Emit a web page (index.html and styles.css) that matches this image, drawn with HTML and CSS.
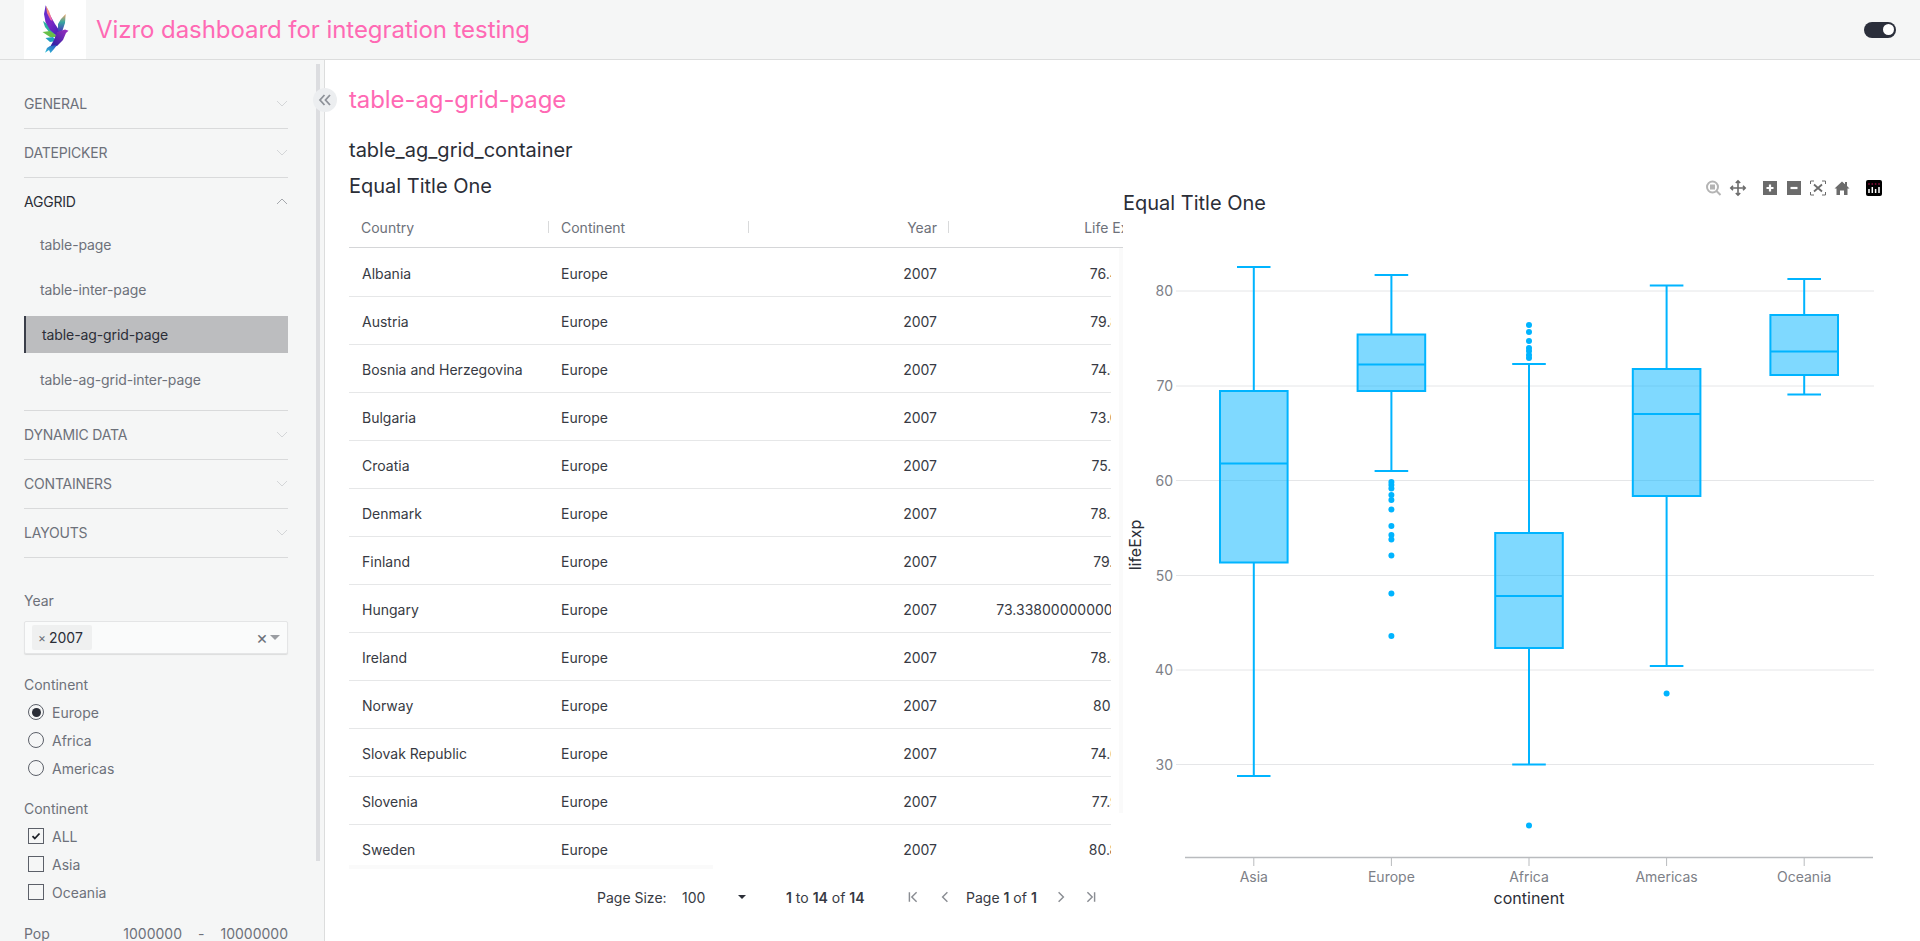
FILE: index.html
```html
<!DOCTYPE html>
<html lang="en">
<head>
<meta charset="UTF-8">
<title>Vizro dashboard for integration testing</title>
<link rel="stylesheet" href="styles.css">
</head>
<body>
<header class="app-header">
    <div class="logo">
        <svg width="62" height="59" viewBox="24 0 62 59">
            <defs>
                <linearGradient id="wingTop" x1="0" y1="0" x2="1" y2="1">
                    <stop offset="0" stop-color="#5a2fd0"/>
                    <stop offset="0.5" stop-color="#7a28c4"/>
                    <stop offset="1" stop-color="#3420b4"/>
                </linearGradient>
                <linearGradient id="wingTip" x1="0" y1="0" x2="0" y2="1">
                    <stop offset="0" stop-color="#f8a060"/>
                    <stop offset="1" stop-color="#f060b0"/>
                </linearGradient>
                <linearGradient id="rightWing" x1="0" y1="0" x2="0" y2="1">
                    <stop offset="0" stop-color="#f0a060"/>
                    <stop offset="0.45" stop-color="#38a8a0"/>
                    <stop offset="1" stop-color="#4a2cc0"/>
                </linearGradient>
                <linearGradient id="birdBody" x1="1" y1="0" x2="0" y2="1">
                    <stop offset="0" stop-color="#a030c0"/>
                    <stop offset="1" stop-color="#1f1fa0"/>
                </linearGradient>
                <linearGradient id="birdTail" x1="1" y1="0" x2="0" y2="1">
                    <stop offset="0" stop-color="#2a50c0"/>
                    <stop offset="1" stop-color="#30c8d8"/>
                </linearGradient>
            </defs>
            <polygon fill="#2fb0a0" points="43,21 50,26 57,35 50,33 45,27"/>
            <polygon fill="#68c048" points="42.500,32 50,31 59,37 50,37"/>
            <polygon fill="#1f9fc0" points="45.500,38 53,37 57,41 50,42"/>
            <polygon fill="url(#wingTop)" points="45.700,5.300 50,15 55,24 61,33 57,36 50,30 45.500,22 44,14"/>
            <polygon fill="url(#wingTip)" points="46,6 49,11 52.500,21 50.500,20 47,13"/>
            <polygon fill="url(#rightWing)" points="65.700,14 65,23 62,32 58,31 58,24 61,19"/>
            <polygon fill="url(#birdBody)" points="57,32 65,29.500 68.500,30.700 66,33 63,40 57,46 50,47 54,40"/>
            <polygon fill="url(#birdTail)" points="50,46 57,45 54,49 50.500,53 49,50 45,52.700 47,48"/>
        </svg>
    </div>
    <span class="app-title">Vizro dashboard for integration testing</span>
    <span class="theme-toggle"><span class="theme-knob"></span></span>
</header>

<div class="app-body">
    <aside class="sidebar">
        <nav class="accordion">
            <div class="acc-item"><span>GENERAL</span><svg class="chev" viewBox="0 0 12 7"><path d="M1 1l5 5 5-5"/></svg></div>
            <div class="acc-item"><span>DATEPICKER</span><svg class="chev" viewBox="0 0 12 7"><path d="M1 1l5 5 5-5"/></svg></div>
            <div class="acc-group">
                <div class="acc-item open"><span>AGGRID</span><svg class="chev" viewBox="0 0 12 7"><path d="M1 6l5-5 5 5"/></svg></div>
                <a class="acc-link">table-page</a>
                <a class="acc-link">table-inter-page</a>
                <a class="acc-link active">table-ag-grid-page</a>
                <a class="acc-link">table-ag-grid-inter-page</a>
            </div>
            <div class="acc-item"><span>DYNAMIC DATA</span><svg class="chev" viewBox="0 0 12 7"><path d="M1 1l5 5 5-5"/></svg></div>
            <div class="acc-item"><span>CONTAINERS</span><svg class="chev" viewBox="0 0 12 7"><path d="M1 1l5 5 5-5"/></svg></div>
            <div class="acc-item"><span>LAYOUTS</span><svg class="chev" viewBox="0 0 12 7"><path d="M1 1l5 5 5-5"/></svg></div>
        </nav>

        <div class="controls">
            <div class="control-label">Year</div>
            <div class="dropdown">
                <span class="tag"><span class="tag-x">×</span>2007</span>
                <span class="dd-clear">×</span>
                <span class="dd-caret"></span>
            </div>

            <div class="control-label label-second">Continent</div>
            <div class="option"><span class="radio checked"></span>Europe</div>
            <div class="option"><span class="radio"></span>Africa</div>
            <div class="option"><span class="radio"></span>Americas</div>

            <div class="control-label label-third">Continent</div>
            <div class="option"><span class="check"><svg width="10" height="8" viewBox="0 0 10 8"><path d="M1.500 4.200l2.300 2.300 4.700-5"/></svg></span>ALL</div>
            <div class="option"><span class="check"></span>Asia</div>
            <div class="option"><span class="check"></span>Oceania</div>

            <div class="range-row">
                <span>Pop</span>
                <span class="range-inputs"><span class="range-val">1000000</span><span>-</span><span class="range-val">10000000</span></span>
            </div>
        </div>
        <div class="side-scroll"></div>
        <div class="collapse-btn">
            <svg width="14" height="12" viewBox="0 0 14 12"><path d="M6.500 1L2 6l4.500 5M12 1L7.500 6l4.500 5"/></svg>
        </div>
    </aside>

    <main class="page">
        <h1 class="page-title">table-ag-grid-page</h1>
        <h2 class="container-title">table_ag_grid_container</h2>
        <div class="page-grid">
            <section class="table-col">
                <h3 class="table-title">Equal Title One</h3>
                <div class="grid-header">
                    <div class="hcell">Country</div>
                    <div class="hcell">Continent</div>
                    <div class="hcell num">Year</div>
                    <div class="hcell num">Life Exp</div>
                </div>
                <div class="grid-viewport">
                    <div class="grid-rows">
                        <div class="row"><span>Albania</span><span>Europe</span><span class="num">2007</span><span class="num">76.423</span></div>
                        <div class="row"><span>Austria</span><span>Europe</span><span class="num">2007</span><span class="num">79.829</span></div>
                        <div class="row"><span>Bosnia and Herzegovina</span><span>Europe</span><span class="num">2007</span><span class="num">74.852</span></div>
                        <div class="row"><span>Bulgaria</span><span>Europe</span><span class="num">2007</span><span class="num">73.005</span></div>
                        <div class="row"><span>Croatia</span><span>Europe</span><span class="num">2007</span><span class="num">75.748</span></div>
                        <div class="row"><span>Denmark</span><span>Europe</span><span class="num">2007</span><span class="num">78.332</span></div>
                        <div class="row"><span>Finland</span><span>Europe</span><span class="num">2007</span><span class="num">79.313</span></div>
                        <div class="row"><span>Hungary</span><span>Europe</span><span class="num">2007</span><span class="num">73.33800000000001</span></div>
                        <div class="row"><span>Ireland</span><span>Europe</span><span class="num">2007</span><span class="num">78.885</span></div>
                        <div class="row"><span>Norway</span><span>Europe</span><span class="num">2007</span><span class="num">80.196</span></div>
                        <div class="row"><span>Slovak Republic</span><span>Europe</span><span class="num">2007</span><span class="num">74.663</span></div>
                        <div class="row"><span>Slovenia</span><span>Europe</span><span class="num">2007</span><span class="num">77.926</span></div>
                        <div class="row"><span>Sweden</span><span>Europe</span><span class="num">2007</span><span class="num">80.884</span></div>
                    </div>
                    <div class="vtrack"></div>
                    <div class="htrack"></div>
                </div>
                <div class="pager">
                    <span class="pager-label">Page Size:</span>
                    <span class="pager-select">100<span class="pager-caret"></span></span>
                    <span class="pager-count"><b>1</b> to <b>14</b> of <b>14</b></span>
                    <svg class="pager-icon first" viewBox="0 0 10 10"><path d="M2 1v8M8 1L4 5l4 4"/></svg>
                    <svg class="pager-icon" viewBox="0 0 10 10"><path d="M7 1L3 5l4 4"/></svg>
                    <span class="pager-page">Page <b>1</b> of <b>1</b></span>
                    <svg class="pager-icon" viewBox="0 0 10 10"><path d="M3 1l4 4-4 4"/></svg>
                    <svg class="pager-icon" viewBox="0 0 10 10"><path d="M2 1l4 4-4 4M8 1v8"/></svg>
                </div>
            </section>

            <section class="chart-col">
                <svg class="chart" width="797" height="761" viewBox="1123 180 797 761">
                    <text class="chart-title" x="1123" y="210">Equal Title One</text>

                    <g class="modebar">
                        <g class="mb-zoom">
                            <circle cx="1712.500" cy="187" r="5.500"/>
                            <rect x="1710" y="184.500" width="5" height="5"/>
                            <path d="M1716.500 191l4 4"/>
                        </g>
                        <path class="mb-pan" d="M1738 181v14M1731 188h14M1735.800 183l2.200-2.200 2.200 2.200M1735.800 193l2.200 2.200 2.200-2.200M1733 185.800l-2.200 2.200 2.200 2.200M1743 185.800l2.200 2.200-2.200 2.200"/>
                        <rect class="mb-box" x="1763" y="181" width="14" height="14"/>
                        <path class="mb-sign" d="M1770 184.500v7M1766.500 188h7"/>
                        <rect class="mb-box" x="1787" y="181" width="14" height="14"/>
                        <path class="mb-sign" d="M1790.500 188h7"/>
                        <path class="mb-auto" d="M1810.500 184v-3h3.500M1822 181h3.500v3M1825.500 192v3h-3.500M1814 195h-3.500v-3"/>
                        <path class="mb-autox" d="M1814 184.500l8 7M1822 184.500l-8 7"/>
                        <path class="mb-home" d="M1842 181.500l3 2.700v-2.200h2v4l2.500 2.500h-2v6.500h-3.500v-4.500h-4v4.500h-3.500v-6.500h-2z"/>
                        <rect x="1866" y="180" width="16" height="16" rx="2" fill="#000"/>
                        <path class="mb-bars" d="M1869 189v4M1872.300 187v6M1875.600 189v4M1879 187v6"/>
                        <path class="mb-dots" d="M1869 183.500v1M1872.300 183.500v1M1875.600 183.500v1M1879 183.500v1"/>
                    </g>

                    <g class="gridlines">
                        <path d="M1176 291H1874M1176 386H1874M1176 480.500H1874M1176 575.500H1874M1176 670H1874M1176 764.500H1874"/>
                    </g>
                    <g class="ticklabels">
                        <text x="1173" y="296" text-anchor="end">80</text>
                        <text x="1173" y="391" text-anchor="end">70</text>
                        <text x="1173" y="485.500" text-anchor="end">60</text>
                        <text x="1173" y="580.500" text-anchor="end">50</text>
                        <text x="1173" y="675" text-anchor="end">40</text>
                        <text x="1173" y="769.500" text-anchor="end">30</text>
                    </g>
                    <text class="axis-title" transform="translate(1141 545) rotate(-90)" text-anchor="middle">lifeExp</text>

                    <!-- boxes: whisker, box, median, caps -->
                    <g class="box">
                        <path d="M1253.800 267V391M1253.800 562V776M1237 267H1270.500M1237 776H1270.500"/>
                        <rect x="1220" y="391" width="67.600" height="171.500"/>
                        <path d="M1220 463.500H1287.600"/>
                    </g>
                    <g class="box">
                        <path d="M1391.400 275V334.500M1391.400 391V471M1374.600 275H1408.200M1374.600 471H1408.200"/>
                        <rect x="1357.600" y="334.500" width="67.600" height="56.500"/>
                        <path d="M1357.600 364.500H1425.200"/>
                    </g>
                    <g class="box">
                        <path d="M1529 364V533M1529 648V764.500M1512.200 364H1545.800M1512.200 764.500H1545.800"/>
                        <rect x="1495.200" y="533" width="67.600" height="115"/>
                        <path d="M1495.200 596H1562.800"/>
                    </g>
                    <g class="box">
                        <path d="M1666.600 285.500V369M1666.600 496V666M1649.800 285.500H1683.400M1649.800 666H1683.400"/>
                        <rect x="1632.800" y="369" width="67.600" height="127"/>
                        <path d="M1632.800 414H1700.400"/>
                    </g>
                    <g class="box">
                        <path d="M1804.200 279V315M1804.200 375V394.500M1787.400 279H1821M1787.400 394.500H1821"/>
                        <rect x="1770.400" y="315" width="67.600" height="60"/>
                        <path d="M1770.400 351.500H1838"/>
                    </g>

                    <g class="points">
                        <circle cx="1391.400" cy="482" r="3"/><circle cx="1391.400" cy="485" r="3"/><circle cx="1391.400" cy="488.500" r="3"/>
                        <circle cx="1391.400" cy="495" r="3"/><circle cx="1391.400" cy="500" r="3"/><circle cx="1391.400" cy="509.500" r="3"/>
                        <circle cx="1391.400" cy="526" r="3"/><circle cx="1391.400" cy="535" r="3"/><circle cx="1391.400" cy="539.500" r="3"/>
                        <circle cx="1391.400" cy="555.500" r="3"/><circle cx="1391.400" cy="593.500" r="3"/><circle cx="1391.400" cy="636" r="3"/>
                        <circle cx="1529" cy="325" r="3"/><circle cx="1529" cy="332" r="3"/><circle cx="1529" cy="341" r="3"/>
                        <circle cx="1529" cy="348" r="3"/><circle cx="1529" cy="351" r="3"/><circle cx="1529" cy="355" r="3"/>
                        <circle cx="1529" cy="358" r="3"/><circle cx="1529" cy="825.500" r="3"/>
                        <circle cx="1666.600" cy="693.500" r="3"/>
                    </g>

                    <path class="axis-line" d="M1185 857.500H1873"/>
                    <path class="axis-ticks" d="M1253.800 858v8M1391.400 858v8M1529 858v8M1666.600 858v8M1804.200 858v8"/>
                    <g class="ticklabels">
                        <text x="1253.800" y="882" text-anchor="middle">Asia</text>
                        <text x="1391.400" y="882" text-anchor="middle">Europe</text>
                        <text x="1529" y="882" text-anchor="middle">Africa</text>
                        <text x="1666.600" y="882" text-anchor="middle">Americas</text>
                        <text x="1804.200" y="882" text-anchor="middle">Oceania</text>
                    </g>
                    <text class="axis-title" x="1529" y="904" text-anchor="middle">continent</text>
                </svg>
            </section>
        </div>
    </main>
</div>
</body>
</html>
```

FILE: styles.css
```css
* {
    box-sizing: border-box;
}
html, body {
    margin: 0;
    height: 941px;
    overflow: hidden;
}
body {
    font-family: 'Inter', sans-serif;
    font-size: 14px;
    color: #373a43;
    background-color: #fff;
}

/* header */
.app-header {
    display: flex;
    align-items: center;
    height: 60px;
    padding: 0 24px;
    background-color: #f5f6f6;
    border-bottom: 1px solid #dcdddd;
}
.logo {
    width: 62px;
    height: 59px;
    background-color: #fff;
}
.logo svg {
    display: block;
}
.app-title {
    margin-left: 10px;
    font-size: 24px;
    font-weight: 400;
    letter-spacing: -0.06px;
    color: #ff69b4;
}
.theme-toggle {
    display: flex;
    align-items: center;
    justify-content: flex-end;
    width: 32px;
    height: 16px;
    margin-left: auto;
    padding-right: 2px;
    border-radius: 8px;
    background-color: #2b2f3b;
}
.theme-knob {
    width: 11px;
    height: 11px;
    border-radius: 50%;
    background-color: #fff;
}

/* sidebar */
.app-body {
    display: flex;
    height: 881px;
}
.sidebar {
    position: relative;
    flex: none;
    width: 325px;
    padding: 20px 36px 0 24px;
    overflow: visible;
    background-color: #f5f6f6;
    border-right: 1px solid #dcdddd;
}
.acc-item {
    display: flex;
    align-items: center;
    justify-content: space-between;
    height: 49px;
    padding-bottom: 1px;
    border-bottom: 1px solid #d9dadb;
    color: #6d717a;
}
.acc-item span {
    letter-spacing: -0.2px;
}
.acc-item.open {
    height: 48px;
    border-bottom: none;
    color: #2b2e37;
}
.chev {
    width: 12px;
    height: 7px;
    margin-right: 0;
    fill: none;
    stroke: #d4d6d8;
    stroke-width: 1;
}
.open .chev {
    stroke: #a5a8ad;
}
.acc-group {
    height: 233px;
    padding-top: 0;
    border-bottom: 1px solid #d9dadb;
}
.acc-link {
    display: flex;
    align-items: center;
    height: 37px;
    margin-bottom: 8px;
    padding-left: 16px;
    color: #6d717a;
    letter-spacing: -0.1px;
}
.acc-link.active {
    padding-left: 16px;
    color: #2b2e37;
    background-color: #bcbdbf;
    border-left: 2px solid #3a3e49;
}

/* controls */
.controls {
    padding-top: 33px;
    color: #6d717a;
}
.control-label {
    height: 20px;
    line-height: 20px;
}
.dropdown {
    display: flex;
    align-items: center;
    height: 33px;
    margin-top: 10px;
    padding: 0 7px;
    background-color: #fafbfb;
    border: 1px solid #e4e5e6;
    border-radius: 2px;
    box-shadow: 0 1px 1px rgba(0, 0, 0, 0.1);
}
.tag {
    display: flex;
    align-items: center;
    width: 60px;
    height: 25px;
    padding-left: 6px;
    color: #2b2e37;
    background-color: #eff0f0;
    border-radius: 2px;
}
.tag-x {
    margin-right: 3px;
    color: #6d717a;
    font-size: 12px;
}
.dd-clear {
    margin-left: auto;
    color: #6d717a;
    font-size: 18px;
    line-height: 1;
}
.dd-caret {
    width: 0;
    height: 0;
    margin-left: 2px;
    border-left: 5px solid transparent;
    border-right: 5px solid transparent;
    border-top: 5px solid #9a9da2;
}
.label-second {
    margin-top: 21px;
}
.label-third {
    margin-top: 17px;
}
.option {
    display: flex;
    align-items: center;
    height: 28px;
    padding-left: 4px;
}
.control-label + .option {
    margin-top: 3px;
}
.radio, .check {
    display: flex;
    align-items: center;
    justify-content: center;
    flex: none;
    width: 16px;
    height: 16px;
    margin-right: 8px;
    border: 1px solid #5c6069;
}
.radio {
    border-radius: 50%;
}
.radio.checked::after {
    content: "";
    width: 9px;
    height: 9px;
    border-radius: 50%;
    background-color: #2b2e37;
}
.check svg {
    fill: none;
    stroke: #1c1f27;
    stroke-width: 1.800;
}
.range-row {
    display: flex;
    justify-content: space-between;
    margin-top: 18px;
    line-height: 20px;
}
.range-inputs {
    display: flex;
    gap: 16px;
}
.range-val {
    border-bottom: 1px solid #d9dadb;
}
.side-scroll {
    position: absolute;
    top: 4px;
    left: 316px;
    width: 4px;
    height: 797px;
    background-color: #dcdde0;
}
.collapse-btn {
    position: absolute;
    top: 28px;
    left: 313px;
    z-index: 2;
    display: flex;
    align-items: center;
    justify-content: center;
    width: 24px;
    height: 24px;
    border-radius: 50%;
    background-color: #eceef0;
}
.collapse-btn svg {
    fill: none;
    stroke: #8e9299;
    stroke-width: 1.800;
}

/* page */
.page {
    flex: 1;
    min-width: 0;
    padding: 0 0 0 24px;
    overflow: hidden;
}
.page-title {
    margin: 26px 0 0;
    font-size: 24px;
    line-height: 28px;
    font-weight: 400;
    letter-spacing: -0.1px;
    color: #ff69b4;
}
.container-title {
    margin: 24px 0 0;
    font-size: 20px;
    line-height: 24px;
    font-weight: 400;
    color: #2b2e37;
}
.page-grid {
    display: flex;
    margin-top: 12px;
}
.table-col {
    flex: none;
    width: 774px;
}
.table-title {
    margin: 0;
    height: 24px;
    font-size: 20px;
    line-height: 24px;
    font-weight: 400;
    color: #2b2e37;
}
.chart-col {
    flex: none;
    width: 797px;
    padding-top: 6px;
}
.chart {
    display: block;
    overflow: visible;
    font-family: 'Inter', sans-serif;
}

/* ag grid */
.grid-header {
    display: flex;
    width: 774px;
    height: 40px;
    margin-top: 10px;
    overflow: hidden;
    border-bottom: 1px solid #d5d6d8;
}
.hcell {
    position: relative;
    flex: none;
    width: 200px;
    padding: 0 12px;
    line-height: 40px;
    color: #6d717a;
}
.hcell + .hcell::before {
    content: "";
    position: absolute;
    top: 13px;
    left: -1px;
    width: 1px;
    height: 12px;
    background-color: #d9dadb;
}
.num {
    text-align: right;
}
.grid-viewport {
    position: relative;
    width: 774px;
    height: 621px;
    overflow: hidden;
}
.grid-rows {
    width: 762px;
    height: 620px;
    margin-top: 1px;
    overflow: hidden;
}
.row {
    display: flex;
    width: 800px;
    height: 48px;
    padding-top: 2px;
    line-height: 46px;
    border-bottom: 1px solid #e6e7e8;
    white-space: nowrap;
}
.row span {
    flex: none;
    width: 200px;
    padding: 0 12px;
}
.row span:first-child {
    padding-left: 13px;
}
.row span:last-child {
    padding-right: 13px;
}
.vtrack {
    position: absolute;
    top: 0;
    right: 0;
    width: 4px;
    height: 565px;
    background-color: #fafafa;
}
.htrack {
    position: absolute;
    left: 0;
    bottom: 0;
    width: 364px;
    height: 4px;
    background-color: #fafafa;
}
.pager {
    display: flex;
    align-items: center;
    height: 24px;
    margin-top: 16px;
    padding-left: 248px;
}
.pager b {
    font-weight: 600;
}
.pager-label {
    width: 85px;
}
.pager-select {
    display: flex;
    align-items: center;
    justify-content: space-between;
    width: 64px;
}
.pager-caret {
    width: 0;
    height: 0;
    border-left: 4px solid transparent;
    border-right: 4px solid transparent;
    border-top: 4px solid #2b2e37;
}
.pager-count {
    margin-left: 40px;
    width: 121px;
    white-space: nowrap;
}
.pager-icon {
    flex: none;
    width: 12px;
    height: 12px;
    margin-right: 18px;
    fill: none;
    stroke: #8a8d93;
    stroke-width: 1.200;
}
.pager-icon.first {
    margin-right: 20px;
}
.pager-page {
    width: 89px;
    margin-left: -3px;
    white-space: nowrap;
}

/* plot */
.chart-title {
    font-size: 20px;
    fill: #2b2e37;
}
.gridlines path {
    fill: none;
    stroke: #e5e6e8;
    stroke-width: 1;
}
.ticklabels text {
    font-size: 14px;
    fill: #7d8087;
}
.axis-title {
    font-size: 16px;
    fill: #2b2e37;
}
.box path {
    fill: none;
    stroke: #00b4ff;
    stroke-width: 2;
}
.box rect {
    fill: rgba(0, 180, 255, 0.5);
    stroke: #00b4ff;
    stroke-width: 2;
}
.points circle {
    fill: #00b4ff;
}
.axis-line {
    fill: none;
    stroke: #b9bbbe;
    stroke-width: 1.500;
}
.axis-ticks {
    fill: none;
    stroke: #b9bbbe;
    stroke-width: 1;
}

/* plotly modebar */
.mb-zoom circle, .mb-zoom path {
    fill: none;
    stroke: #b4b4b4;
    stroke-width: 2;
}
.mb-zoom rect {
    fill: #b4b4b4;
}
.mb-pan {
    fill: none;
    stroke: #6b6b6b;
    stroke-width: 1.600;
}
.mb-box {
    fill: #6b6b6b;
}
.mb-sign {
    fill: none;
    stroke: #fff;
    stroke-width: 2.200;
}
.mb-auto {
    fill: none;
    stroke: #6b6b6b;
    stroke-width: 1;
}
.mb-autox {
    fill: none;
    stroke: #6b6b6b;
    stroke-width: 1.800;
}
.mb-home {
    fill: #6b6b6b;
}
.mb-bars {
    fill: none;
    stroke: #fff;
    stroke-width: 1.500;
}
.mb-dots {
    fill: none;
    stroke: #e0115f;
    stroke-width: 1.500;
}
```
